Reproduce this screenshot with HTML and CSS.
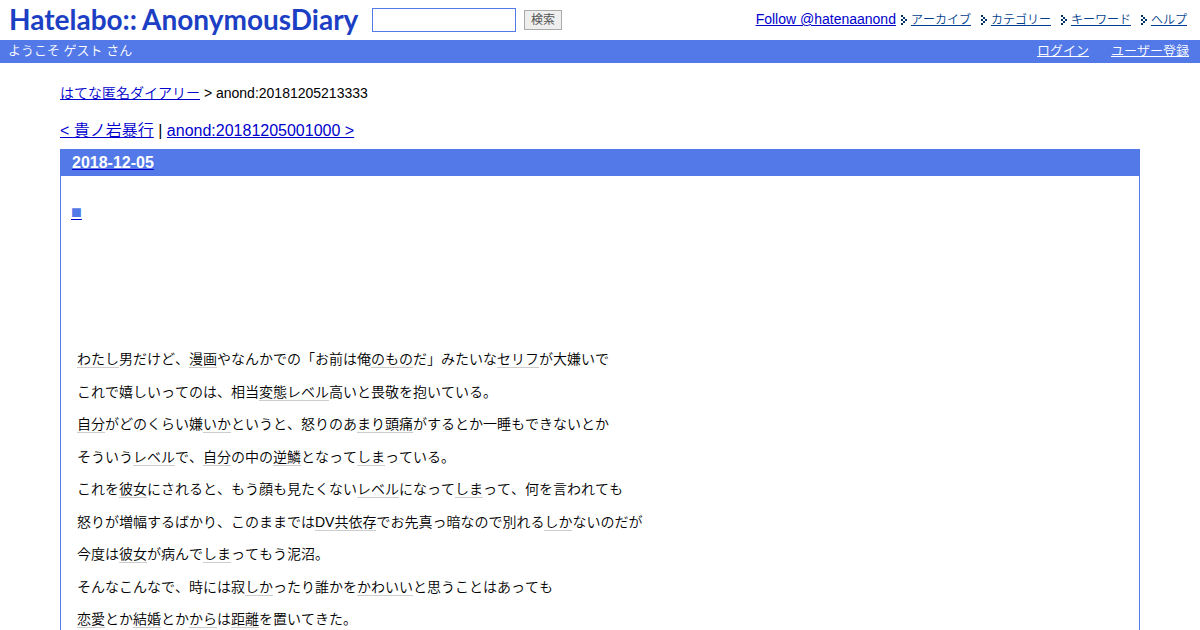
FILE: index.html
```html
<!DOCTYPE html>
<html lang="ja">
<head>
<meta charset="utf-8">
<title>anond:20181205213333</title>
<link rel="stylesheet" href="styles.css">
</head>
<body>
<svg class="defs" aria-hidden="true"><symbol id="arrow" viewBox="0 0 6 10"><path fill="#003366" d="M0 0h2v2H0zM2 2h2v2H2zM4 4h2v2H4zM2 6h2v2H2zM0 8h2v2H0zM0 4h2v2H0z"/></symbol></svg>
<header class="top">
  <h1 class="logo"><span>Hatelabo::</span><span>AnonymousDiary</span></h1>
  <form class="search">
    <input class="search-box" type="text" aria-label="検索">
    <button class="search-button" type="button">検索</button>
  </form>
  <nav class="tools">
    <a class="follow" href="#">Follow @hatenaanond</a>
    <ul class="menu">
      <li><svg class="arrow"><use href="#arrow"/></svg><a href="#">アーカイブ</a></li>
      <li><svg class="arrow"><use href="#arrow"/></svg><a href="#">カテゴリー</a></li>
      <li><svg class="arrow"><use href="#arrow"/></svg><a href="#">キーワード</a></li>
      <li><svg class="arrow"><use href="#arrow"/></svg><a href="#">ヘルプ</a></li>
    </ul>
  </nav>
</header>
<div class="bar">
  <span>ようこそ ゲスト さん</span>
  <nav class="account"><a href="#">ログイン</a><a href="#">ユーザー登録</a></nav>
</div>
<main class="content">
  <p class="crumbs"><a href="#">はてな匿名ダイアリー</a> &gt; anond:20181205213333</p>
  <nav class="pager"><a href="#">&lt; 貴ノ岩暴行</a> | <a href="#">anond:20181205001000 &gt;</a></nav>
  <article class="day">
    <h2 class="date"><a href="#">2018-12-05</a></h2>
    <div class="body">
      <h3 class="mark"><a href="#"><span>■</span></a></h3>
      <div class="section">
        <p><a href="#">わたし</a>男だけど、<a href="#">漫画</a>やなんかでの「お前は俺<a href="#">のもの</a>だ」みたいな<a href="#">セリフ</a>が大嫌いで</p>
        <p>これで嬉しいってのは、相当<a href="#">変態</a><a href="#">レベル</a>高いと畏敬を抱いている。</p>
        <p><a href="#">自分</a>がどのくらい嫌<a href="#">いか</a>というと、怒りのあ<a href="#">まり</a><a href="#">頭痛</a>がするとか一睡もできないとか</p>
        <p>そういう<a href="#">レベル</a>で、<a href="#">自分</a>の中の<a href="#">逆鱗</a>となって<a href="#">しま</a>っている。</p>
        <p>これを<a href="#">彼女</a>にされると、もう顔も見たくない<a href="#">レベル</a>になって<a href="#">しま</a>って、何を言われても</p>
        <p>怒りが増幅するばかり、このままでは<a href="#">DV</a><a href="#">共依存</a>でお先真っ暗なので別れる<a href="#">しか</a>ないのだが</p>
        <p>今度は<a href="#">彼女</a>が病んで<a href="#">しま</a>ってもう泥沼。</p>
        <p>そんなこんなで、時には寂<a href="#">しか</a>ったり誰かを<a href="#">かわいい</a>と思うことはあっても</p>
        <p><a href="#">恋愛</a>とか<a href="#">結婚</a>とか<a href="#">から</a>は<a href="#">距離</a>を置いてきた。</p>
      </div>
    </div>
  </article>
</main>
</body>
</html>
```
FILE: styles.css
```css
* { box-sizing: border-box; }
body {
  margin: 0;
  min-height: 100vh;
  display: flex;
  flex-direction: column;
  background: #fff;
  color: #000;
  font-family: "Liberation Sans", "Noto Sans CJK JP", sans-serif;
  font-size: 14px;
  font-weight: 350;
  font-kerning: none;
}
h1, h2, h3, p, ul { margin: 0; padding: 0; }
a { color: #0000cc; }
.defs { display: none; }

.top {
  height: 40px;
  display: flex;
  align-items: center;
  padding: 0 13px 0 9px;
}
.logo {
  display: flex;
  gap: 5px;
  width: 363px;
  padding-bottom: 2px;
  font: 700 28px/38px Lato, sans-serif;
  font-kerning: normal;
  color: #1c3fc4;
}
.search { display: flex; align-items: center; gap: 8px; }
.search-box {
  width: 144px;
  height: 24px;
  padding: 0 4px;
  border: 1px solid #5279e7;
  background: #fff;
}
.search-button {
  width: 38px;
  height: 20px;
  padding: 0;
  border: 1px solid #aaa;
  background: #eee;
  color: #555;
  font: 12px/16px "Liberation Sans", "Noto Sans CJK JP", sans-serif;
}
.tools { display: flex; align-items: baseline; gap: 5px; margin: 0 0 3px auto; }
.menu { display: flex; gap: 10px; list-style: none; font-size: 12px; }
.menu a { color: #003e8e; }
.arrow { width: 6px; height: 10px; margin-right: 4px; vertical-align: -1px; }

.bar {
  display: flex;
  justify-content: space-between;
  padding: 0 11px 1px 8px;
  background: #5279e7;
  color: #fff;
  font-size: 13px;
  line-height: 22px;
}
.account { display: flex; gap: 22px; }
.account a { color: #fff; }

.content {
  flex: 1;
  display: flex;
  flex-direction: column;
  margin: 0 60px;
  padding-top: 20px;
}
.crumbs { line-height: 20px; }
.pager { margin-top: 18px; font-size: 16px; line-height: 20px; }
.day {
  flex: 1;
  margin-top: 8px;
  border: 1px solid #5279e7;
  border-bottom: 0;
}
.date {
  padding-left: 11px;
  background: #5279e7;
  font-size: 16px;
  line-height: 26px;
}
.date a { color: #fff; text-decoration-color: #0000cc; }
.body { padding: 26px 10px 0; }
.mark { font-size: 18px; line-height: 20px; }
.mark span { color: #5279e7; }
.section { padding: 129px 6px 0; line-height: 1.25; }
.section p { margin-bottom: 15px; }
.section p:last-child { margin-bottom: 0; }
.section a {
  color: #000;
  text-decoration: none;
  border-bottom: 1px solid #ccc;
}
```
